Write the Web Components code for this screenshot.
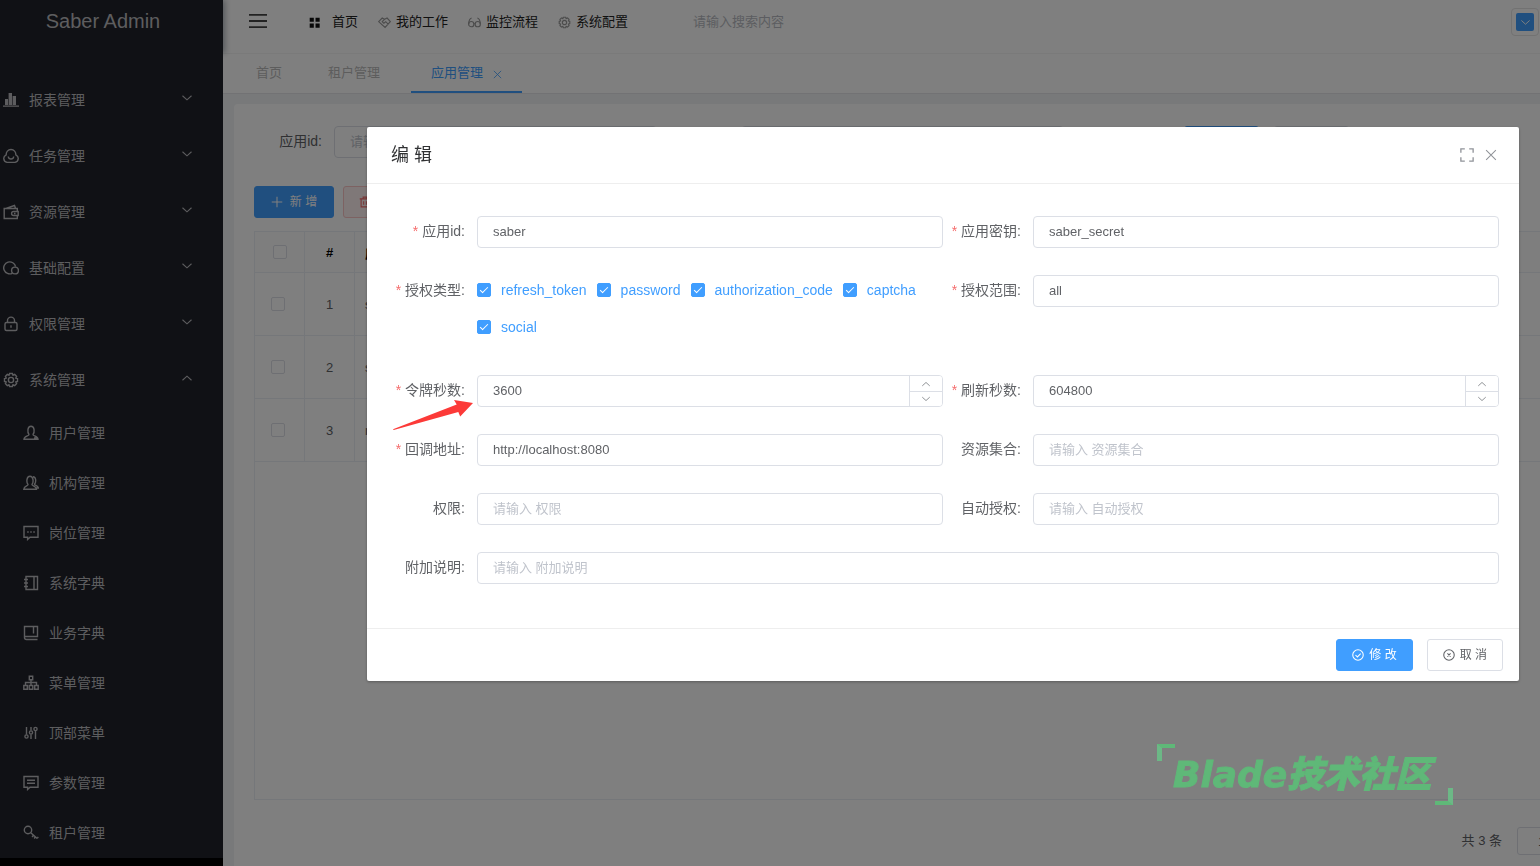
<!DOCTYPE html>
<html lang="zh-CN">
<head>
<meta charset="utf-8">
<meta name="viewport" content="width=device-width, initial-scale=1">
<title>Saber Admin</title>
<style>
  body {
    margin: 0;
    font: 14px "Liberation Sans", "Noto Sans CJK SC", sans-serif;
    color: #606266;
    background: #f0f2f5;
    --primary: #409eff;
    --line: #dcdfe6;
    overflow: hidden;
  }
</style>
</head>
<body>
<saber-app></saber-app>
<script>
const ICONS = {
  chart: '<path fill="currentColor" stroke="none" d="M0 13.500h16v1.200H0zM2 7h3v6H2zM5.600 1H9v12H5.600zM9.600 4h3.400v9H9.600z"/>',
  cloud: '<path d="M8 1.500c3 0 5 2.500 4.800 5.300A4 4 0 0 1 12 14.400H4A4 4 0 0 1 3.200 6.800C3 4 5 1.500 8 1.500zM5.300 8.500c.4 3.400 5 3.400 5.400 0"/>',
  wallet: '<path d="M14.300 7V4.500H1.200v10h13.100V12M3 4.300 11.500 1.500l1 2.800M10.600 7.500h4.600v4h-4.600a2 2 0 0 1 0-4zM11 9.500h1.500"/>',
  circles: '<path d="M9.300 13.300A6 6 0 1 1 12.600 6.700"/><circle cx="12" cy="10.500" r="3.400"/>',
  lock: '<rect x="2" y="6.500" width="12" height="8" rx="1.500"/><path d="M4.500 6.500V4.600a3.500 3.500 0 0 1 7 0v1.900M8 9.300v2.500"/>',
  gear: '<path d="M6.600 1.500h2.800l.6 1.700 1.700-.8 1.900 1.900-.8 1.700 1.700.6v2.800l-1.700.6.8 1.700-1.900 1.900-1.700-.8-.6 1.700H6.600L6 12.800l-1.700.8-1.900-1.900.8-1.700-1.700-.6V6.600L3.200 6l-.8-1.700 1.900-1.900 1.700.8z"/><circle cx="8" cy="8" r="2.600"/>',
  user: '<path d="M6 9.500C4.300 7.500 4.200 1.200 8 1.200s3.700 6.300 2 8.300c-.3 1.600 4.800 1.400 5 4.800H1c.2-3.400 5.300-3.200 5-4.800zM11 13h4"/>',
  users: '<path d="M5 9.500C3.300 7.500 3.300 1.200 7 1.200s3.600 6.300 2 8.300c-.3 1.600 4.200 1.400 4.500 4.800H.8c.2-3.400 4.500-3.200 4.200-4.800zM10 1.700c3.200 0 3.300 5.500 1.500 7.500 0 1.300 3.500 1.200 3.900 3.800h-2.200"/>',
  dots: '<path d="M1 1.500h14v10.800H7L4.600 14.500v-2.200H1z"/><path stroke-width="1.500" d="M4.200 7h1.500M7.250 7h1.500M10.300 7h1.500"/>',
  notebook: '<path d="M3 1.500h11.500v13H3zM11 1.500v13M1 4.500h4M1 8h4M1 11.500h4"/>',
  book: '<path d="M14.500 11V1.500H1.500v11a2 2 0 0 0 2 2h11M1.500 11.500h13V2M10.500 1.500v7"/>',
  tree: '<path d="M6.300 1.300h3.400v3.400H6.300zM8 4.700v5.600M2.500 10.300V7.500h11v2.800M.8 10.500h3.500v3.700H.8zM6.200 10.500h3.600v3.700H6.200zM11.700 10.500h3.500v3.700h-3.500z"/>',
  sliders: '<path d="M3.500 2v7.500M8 2v3.500M8 9.500V14M12.500 6v8"/><circle cx="3.500" cy="11.500" r="1.600"/><circle cx="8" cy="7.500" r="1.600"/><circle cx="12.500" cy="4" r="1.600"/>',
  message: '<path d="M1 1.500h14v10.800H7L4.600 14.500v-2.200H1zM4 5.200h8M4 8.200h8"/>',
  key: '<circle cx="5" cy="5" r="3.700"/><path d="M7.800 7.800l6.400 5.700M10.300 10.300l-1.200 1.700M14.200 13.500l1-1.600M12.300 12l-1.100 1.500"/>',
  down: '<path d="M2 5l6 5.500L14 5"/>',
  up: '<path d="M2 11l6-5.500L14 11"/>',
  plus: '<path d="M8 1v14M1 8h14"/>',
  close: '<path d="M1.500 1.500l13 13M14.500 1.500l-13 13"/>',
  full: '<path stroke-width="1.500" d="M1 5.500V1h4.500M10.500 1H15v4.500M15 10.500V15h-4.500M5.500 15H1v-4.500"/>',
  trash: '<path d="M1 3.800h14M5.500 3.500v-2h5v2M2.800 4v10.500h10.400V4M6.200 7v4.500M9.800 7v4.500"/>',
  check: '<circle cx="8" cy="8" r="7"/><path d="M4.600 8l2.600 2.600 4.400-4.400"/>',
  cancel: '<circle cx="8" cy="8" r="7"/><path d="M5.900 5.900l4.200 4.200M10.100 5.900l-4.200 4.200"/>',
  grid: '<path fill="currentColor" stroke="none" d="M1 1h6v6H1zM9.500 1h6v6h-6zM1 9.500h6v6H1zM9.500 9.500h6v6h-6z"/>',
  work: '<path d="M.8 7l4.400-4.500L8 4l3.200-1.500L15.200 7l-6.500 7zM8 4L5.200 7l2 1.800L9.500 7l3 3M4 10l4.700 4"/>',
  glasses: '<circle cx="4" cy="10" r="3.200"/><circle cx="12" cy="10" r="3.200"/><path d="M.8 10C1 6 2.500 3 4.500 2.500M15.200 10C15 6 13.500 3 11.500 2.500M7.200 9.500h1.600"/>',
  menu: '<path stroke-width="1.600" d="M0 2.500h16M0 8h16M0 13.500h16"/>'
};

/* Base: each element renders its own markup into an open shadow root. */
class Base extends HTMLElement {
  connectedCallback() {
    if (this.shadowRoot) return;
    const t = document.createElement('template');
    t.innerHTML = this.render();
    this.attachShadow({ mode: 'open' }).append(t.content.cloneNode(true));
  }
  a(name, fallback = '') { return this.getAttribute(name) ?? fallback; }
}

customElements.define('ui-icon', class extends Base {
  render() {
    const s = this.a('size', '16');
    return `<style>:host{display:inline-flex;flex:none;width:${s}px;height:${s}px}svg{display:block;width:100%;height:100%}</style>
      <svg viewBox="0 0 16 16" fill="none" stroke="currentColor" stroke-width="1.4" aria-hidden="true">${ICONS[this.a('name')]}</svg>`;
  }
});

customElements.define('ui-button', class extends Base {
  render() {
    const icon = this.a('icon');
    return `<style>
      :host{display:inline-flex;flex:none}
      button{display:flex;align-items:center;justify-content:center;gap:5px;box-sizing:border-box;width:100%;height:32px;
        padding:0 15px;border:1px solid var(--line);border-radius:3px;background:#fff;color:#606266;font:inherit;font-size:12px;line-height:30px;white-space:nowrap}
      :host([kind=primary]) button{background:var(--primary);border-color:var(--primary);color:#fff}
      :host([kind=danger]) button{background:#fef0f0;border-color:#fbc4c4;color:#f56c6c;justify-content:flex-start}
      :host([wide]) button{gap:7px}
    </style>
    <button type="button" ${this.a('name') ? `aria-label="${this.a('name')}"` : ''}>${icon ? `<ui-icon name="${icon}" size="12"></ui-icon>` : ''}<slot></slot></button>`;
  }
});

customElements.define('side-item', class extends Base {
  render() {
    const arrow = this.a('arrow');
    return `<style>
      :host{display:block}
      a{display:flex;align-items:center;height:56px;padding:0 30px 0 3px;color:#bbbbbe;text-decoration:none}
      span{flex:1;margin-left:10px;padding-bottom:2px}
      .arrow{padding-bottom:4px;display:flex}
      :host([sub]) a{height:50px;padding-left:23px}
    </style>
    <a href="#"><ui-icon name="${this.a('icon')}"></ui-icon><span><slot></slot></span>${arrow ? `<div class="arrow"><ui-icon name="${arrow}" size="12"></ui-icon></div>` : ''}</a>`;
  }
});

customElements.define('side-bar', class extends Base {
  render() {
    const top = [['chart','报表管理'],['cloud','任务管理'],['wallet','资源管理'],['circles','基础配置'],['lock','权限管理'],['gear','系统管理']];
    const sub = [['user','用户管理'],['users','机构管理'],['dots','岗位管理'],['notebook','系统字典'],['book','业务字典'],['tree','菜单管理'],['sliders','顶部菜单'],['message','参数管理'],['key','租户管理']];
    return `<style>
      :host{display:block;flex:none;width:223px;background:#000}
      .logo{box-sizing:border-box;position:relative;height:53px;padding-right:17px;line-height:42px;text-align:center;font-size:20px;color:#bbbbbe;background:#20222a;box-shadow:2px 0 6px rgba(0,21,41,.35)}
      nav{position:relative;padding-top:19px;background:#20222a}
    </style>
    <div class="logo">Saber Admin</div>
    <nav>${top.map(([i, t], n) => `<side-item icon="${i}" arrow="${n === 5 ? 'up' : 'down'}">${t}</side-item>`).join('')}
    ${sub.map(([i, t]) => `<side-item sub icon="${i}">${t}</side-item>`).join('')}</nav>`;
  }
});

customElements.define('top-bar', class extends Base {
  render() {
    const item = (i, t) => `<a href="#"><ui-icon name="${i}" size="13"></ui-icon>${t}</a>`;
    return `<style>
      :host{display:flex;box-sizing:border-box;height:54px;padding:0 1px 9px 26px;align-items:center;background:#fff;border-bottom:1px solid #f4f4f4;font-size:13px}
      button{border:0;padding:0 0 2px;background:none;display:flex;color:#444}
      nav{display:flex;gap:20px;margin:0 65px 0 42px}
      a{display:flex;align-items:center;gap:5px;color:#222;text-decoration:none;line-height:20px}
      a ui-icon{color:#999}
      .home{gap:12px} .home ui-icon{color:#111}
      input{border:0;outline:0;padding:0 0 2px;background:none;flex:1;font:inherit;min-width:0}
      input::placeholder{color:#b8bbc2}
      .avatar{flex:none;box-sizing:border-box;width:28px;height:28px;padding:4px;border:1px solid #e4e4e4;border-radius:4px}
      .avatar span{display:flex;align-items:center;justify-content:center;width:18px;height:18px;border-radius:2px;background:var(--primary);color:#fff}
    </style>
    <button aria-label="折叠"><ui-icon name="menu" size="18"></ui-icon></button>
    <nav><a class="home" href="#"><ui-icon name="grid" size="11"></ui-icon>首页</a>${item('work','我的工作')}${item('glasses','监控流程')}${item('gear','系统配置')}</nav>
    <input type="text" aria-label="搜索" placeholder="请输入搜索内容">
    <button class="avatar" aria-label="用户菜单"><span><ui-icon name="down" size="11"></ui-icon></span></button>`;
  }
});

customElements.define('tab-bar', class extends Base {
  render() {
    return `<style>
      :host{display:flex;box-sizing:border-box;height:40px;padding-left:13px;background:#fff;border-bottom:1px solid #e4e4e8;font-size:13px;line-height:38px}
      a{display:block;padding:0 26px 0 20px;color:#bbb;text-decoration:none}
      a.on{display:flex;align-items:center;gap:10px;box-sizing:border-box;margin-left:5px;padding:0 20px;color:var(--primary);border-bottom:2px solid var(--primary)}
      a.on ui-icon{padding-top:4px}
    </style>
    <a href="#">首页</a><a href="#">租户管理</a><a class="on" href="#">应用管理<ui-icon name="close" size="9"></ui-icon></a>`;
  }
});

customElements.define('data-panel', class extends Base {
  render() {
    const row = (n, t) => `<tr><td class="sel"><input type="checkbox" aria-label="选择第${n}行"></td><td class="num">${n}</td><td>${t}</td></tr>`;
    return `<style>
      :host{display:flex;flex-direction:column;flex:1;margin:10px 0 0 11px;padding:22px 0 11px 20px;background:#fff;border-radius:4px 0 0 0;overflow:hidden}
      .search{display:grid;grid-template-columns:403fr 403fr 472fr;gap:4px}
      .f{display:flex}
      label{width:68px;padding-right:12px;flex:none;text-align:right;line-height:30px}
      .f input{flex:1;min-width:0;box-sizing:border-box;height:32px;padding:0 15px 2px;border:1px solid var(--line);border-radius:4px;font:inherit;font-size:13px}
      .f input::placeholder{color:#c0c4cc}
      .second{padding-left:80px}
      .acts{display:flex;gap:15px;padding-left:116px}
      .acts ui-button{width:75px}
      .tools{display:flex;gap:9px;margin:28px 0 13px}
      .tools ui-button{width:80px}
      .frame{flex:1;border:1px solid #ebeef5;border-right:0}
      table{width:100%;border-spacing:0;table-layout:fixed;font-size:13px}
      th,td{box-sizing:border-box;height:63px;padding:0 10px;border-right:1px solid #ebeef5;border-bottom:1px solid #ebeef5;text-align:left}
      th:last-child,td:last-child{border-right:0}
      th{height:41px;color:#000;background:#fcfcfc}
      th.num,td.num{text-align:center}
      th.sel{text-align:center;padding:0 0 2px} td.sel{padding:0 0 2px 16px}
      input[type=checkbox]{appearance:none;display:inline-block;box-sizing:border-box;vertical-align:middle;width:14px;height:14px;margin:0;border:1px solid var(--line);border-radius:2px;background:#fff}
      .page{display:flex;align-items:center;gap:15px;margin-top:27px;justify-content:flex-end;font-size:13px}
      .page span{padding-bottom:4px}
      select{appearance:none;flex:none;box-sizing:border-box;width:110px;height:28px;margin-right:-87px;padding:0 20px;border:1px solid var(--line);border-radius:3px;background:#fff;font:inherit;color:#606266}
    </style>
    <div class="search">
      <div class="f"><label for="q">应用id:</label><input id="q" type="text" placeholder="请输入 应用id"></div>
      <div class="f second"><input type="text" aria-label="应用密钥"></div>
      <div class="acts"><ui-button kind="primary" name="搜索"></ui-button><ui-button name="清空"></ui-button></div>
    </div>
    <div class="tools"><ui-button kind="primary" wide icon="plus">新 增</ui-button><ui-button kind="danger" icon="trash" name="删除"></ui-button></div>
    <div class="frame"><table>
      <colgroup><col style="width:50px"><col style="width:50px"><col></colgroup>
      <thead><tr><th class="sel"><input type="checkbox" aria-label="全选"></th><th class="num">#</th><th>应用id</th></tr></thead>
      <tbody>${row(1,'saber')}${row(2,'sword')}${row(3,'rider')}</tbody>
    </table></div>
    <div class="page"><span>共 3 条</span><select aria-label="每页条数"><option>10条/页</option></select></div>`;
  }
});

customElements.define('form-field', class extends Base {
  render() {
    const number = this.hasAttribute('number');
    const label = this.a('label');
    const control = this.hasAttribute('group')
      ? '<div class="group" role="group" aria-labelledby="l"><slot></slot></div>'
      : `<div class="box"><input id="i" type="${number ? 'number' : 'text'}" value="${this.a('value')}" ${this.a('value') ? '' : `placeholder="请输入 ${label}"`}>
        ${number ? '<div class="spin"><button type="button" aria-label="增加"><ui-icon name="up" size="10"></ui-icon></button><button type="button" aria-label="减少"><ui-icon name="down" size="10"></ui-icon></button></div>' : ''}</div>`;
    return `<style>
      :host{display:flex;min-width:0}
      :host([full]){grid-column:1/-1}
      .label{flex:none;width:78px;padding-right:12px;text-align:right;line-height:30px;white-space:nowrap}
      .label i{color:#f56c6c;font-style:normal;margin-right:4px}
      .box{display:flex;flex:1;min-width:0;box-sizing:border-box;height:32px;border:1px solid var(--line);border-radius:4px;background:#fff;overflow:hidden}
      input{flex:1;min-width:0;box-sizing:border-box;height:28px;padding:0 15px;border:0;outline:0;background:none;color:#606266;font:inherit;font-size:13px;appearance:textfield}
      input::-webkit-inner-spin-button{appearance:none}
      input::placeholder{color:#c0c4cc}
      .spin{display:grid;grid-template-rows:16px 14px;width:32px;border-left:1px solid var(--line)}
      button{display:flex;align-items:center;justify-content:center;padding:0;border:0;background:#fff;color:#808388}
      button:first-child{border-bottom:1px solid var(--line)}
      .group{display:flex;flex-wrap:wrap;flex:1;align-content:flex-start;gap:7px 10px;min-height:73px}
    </style>
    <label class="label" id="l" ${this.hasAttribute('group') ? '' : 'for="i"'}>${this.hasAttribute('required') ? '<i>*</i>' : ''}${label}:</label>${control}`;
  }
});

customElements.define('check-option', class extends Base {
  render() {
    return `<style>
      :host{display:block}
      label{display:flex;align-items:center;gap:10px;height:30px;color:var(--primary);white-space:nowrap}
      input{appearance:none;flex:none;display:grid;place-items:center;box-sizing:border-box;width:14px;height:14px;margin:0;border:1px solid var(--line);border-radius:2px}
      input:checked{background:var(--primary);border-color:var(--primary)}
      input:checked::after{content:"";box-sizing:border-box;width:4px;height:8px;border:solid #fff;border-width:0 1px 1px 0;transform:rotate(45deg);margin-bottom:2px}
    </style><label><input type="checkbox" checked><slot></slot></label>`;
  }
});

customElements.define('edit-dialog', class extends Base {
  render() {
    return `<style>
      :host{display:block;position:fixed;inset:0;padding:127px 21px 0 367px;background:rgba(0,0,0,.5)}
      section{background:#fff;border-radius:2px;box-shadow:0 1px 3px rgba(0,0,0,.3)}
      header{display:flex;align-items:center;height:56px;padding:0 22px 0 24px;border-bottom:1px solid #eee}
      h2{flex:1;margin:0;padding-bottom:4px;font-size:18px;font-weight:400;color:#303133}
      header button{display:flex;padding:0;margin-left:11px;border:0;background:none;color:#909399}
      form{position:relative;display:grid;grid-template-columns:1fr 1fr;row-gap:27px;padding:32px 20px 44px}
      .arrow{position:absolute;left:26px;top:216px;width:80px;height:31px}
      footer{display:flex;justify-content:flex-end;gap:14px;padding:10px 16px;border-top:1px solid #eee}
    </style>
    <section role="dialog" aria-labelledby="t">
      <header><h2 id="t">编 辑</h2>
        <button aria-label="全屏"><ui-icon name="full" size="14"></ui-icon></button>
        <button aria-label="关闭"><ui-icon name="close" size="12"></ui-icon></button></header>
      <form>
        <form-field required label="应用id" value="saber"></form-field>
        <form-field required label="应用密钥" value="saber_secret"></form-field>
        <form-field required group label="授权类型"><check-option>refresh_token</check-option><check-option>password</check-option><check-option>authorization_code</check-option><check-option>captcha</check-option><check-option>social</check-option></form-field>
        <form-field required label="授权范围" value="all"></form-field>
        <form-field required number label="令牌秒数" value="3600"></form-field>
        <form-field required number label="刷新秒数" value="604800"></form-field>
        <form-field required label="回调地址" value="http://localhost:8080"></form-field>
        <form-field label="资源集合"></form-field>
        <form-field label="权限"></form-field>
        <form-field label="自动授权"></form-field>
        <form-field full label="附加说明"></form-field>
        <svg class="arrow" viewBox="0 0 80 31" aria-hidden="true"><path fill="#fc3a38" d="M80 3 61 0l2.700 4.600L0 29.200l.7.800L65.300 12l1.900 4.500z"/></svg>
      </form>
      <footer><ui-button kind="primary" icon="check">修 改</ui-button><ui-button icon="cancel">取 消</ui-button></footer>
    </section>`;
  }
});

customElements.define('brand-mark', class extends Base {
  render() {
    return `<style>
      :host{position:fixed;right:87px;bottom:61px;display:block;box-sizing:border-box;width:296px;height:61px;color:#5fb878}
      p{margin:0;padding-left:16px;font:italic 900 36px/61px "DejaVu Sans","Noto Sans CJK SC",sans-serif;-webkit-text-stroke:1px currentColor;white-space:nowrap}
      .c{position:absolute;box-sizing:border-box;width:18px;height:17px;border:solid currentColor}
      .tl{left:0;top:0;border-width:4px 0 0 5px;border-left-color:#6cb886}
      .br{right:0;bottom:0;border-width:0 5px 4px 0;border-right-color:#6cb886}
    </style><span class="c tl"></span><p>Blade技术社区</p><span class="c br"></span>`;
  }
});

customElements.define('saber-app', class extends Base {
  render() {
    return `<style>
      :host{display:flex;min-height:100vh}
      main{display:flex;flex-direction:column;flex:1;min-width:0}
    </style>
    <side-bar></side-bar>
    <main><top-bar></top-bar><tab-bar></tab-bar><data-panel></data-panel></main>
    <edit-dialog></edit-dialog>
    <brand-mark></brand-mark>`;
  }
});
</script>
</body>
</html>
